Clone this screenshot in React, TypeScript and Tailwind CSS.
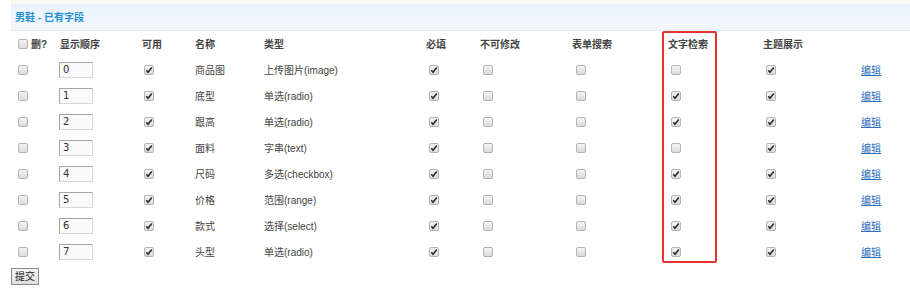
const rows = [
  { order: 0, name: '商品图', type: '上传图片(image)', text: false },
  { order: 1, name: '底型', type: '单选(radio)', text: true },
  { order: 2, name: '跟高', type: '单选(radio)', text: true },
  { order: 3, name: '面料', type: '字串(text)', text: false },
  { order: 4, name: '尺码', type: '多选(checkbox)', text: true },
  { order: 5, name: '价格', type: '范围(range)', text: true },
  { order: 6, name: '款式', type: '选择(select)', text: true },
  { order: 7, name: '头型', type: '单选(radio)', text: true },
]

const cols = 'grid grid-cols-[48px_83px_53px_69px_162px_54px_92px_96px_95px_98px_1fr] items-center'

function Box({ checked }: { checked?: boolean }) {
  return (
    <span className="inline-flex w-[10px] h-[10px] items-center justify-center rounded-[2px] border border-[#b3b3b3] bg-gradient-to-b from-[#f4f4f4] to-[#dcdcdc]">
      {checked && (
        <svg width="8" height="8" viewBox="0 0 8 8">
          <path d="M1.3 4.3 L3 6.2 L6.8 1.6" fill="none" stroke="#2b2b2b" strokeWidth="1.6" />
        </svg>
      )}
    </span>
  )
}

export default function App() {
  return (
    <div className="relative w-[910px] h-[293px] bg-white text-[10px] text-[#444] font-['Liberation_Sans','Noto_Sans_CJK_SC',sans-serif]">
      {/* title bar */}
      <div className="ml-[11px] h-[4px] bg-[#fdf8f1]"></div>
      <div className="ml-[11px] h-[27px] flex items-center pl-[4px] bg-gradient-to-b from-[#eaf3fc] to-[#f2f7fd] border-b border-[#e3edf7]">
        <span className="text-[#1e8fd0] font-bold">男鞋 - 已有字段</span>
      </div>

      <div className="pl-[11px]">
        {/* header */}
        <div className={`${cols} h-[26px] font-bold text-[#444]`}>
          <div className="pl-[7px] flex items-center gap-[3px]">
            <Box />
            <span>删?</span>
          </div>
          <div className="pl-[1px]">显示顺序</div>
          <div>可用</div>
          <div>名称</div>
          <div>类型</div>
          <div>必填</div>
          <div>不可修改</div>
          <div>表单搜索</div>
          <div>文字检索</div>
          <div>主题展示</div>
          <div></div>
        </div>

        {rows.map((r) => (
          <div key={r.order} className={`${cols} h-[26px]`}>
            <div className="pl-[7px] flex"><Box /></div>
            <div className="flex">
              <div className="w-[34px] h-[16px] border border-[#a5a5a5] border-r-[#d8d8d8] border-b-[#d8d8d8] bg-[#fafafa] pl-[3px] leading-[14px] font-['DejaVu_Sans',sans-serif] text-[10px] text-[#333]">
                {r.order}
              </div>
            </div>
            <div className="pl-[2px] flex"><Box checked /></div>
            <div>{r.name}</div>
            <div>{r.type}</div>
            <div className="pl-[3px] flex"><Box checked /></div>
            <div className="pl-[3px] flex"><Box /></div>
            <div className="pl-[4px] flex"><Box /></div>
            <div className="pl-[3px] flex"><Box checked={r.text} /></div>
            <div className="pl-[3px] flex"><Box checked /></div>
            <div><a className="text-[#2a6fc0] underline">编辑</a></div>
          </div>
        ))}

        <button className="mt-[3px] h-[17px] px-[3px] border border-[#8a8a8a] bg-gradient-to-b from-[#f6f6f6] to-[#dedede] text-[10px] leading-[14px] text-[#222]">
          提交
        </button>
      </div>

      {/* highlight annotation */}
      <div className="absolute left-[662px] top-[31px] w-[55px] h-[232px] border-2 border-[#e8322c] rounded-[2px]"></div>
    </div>
  )
}
